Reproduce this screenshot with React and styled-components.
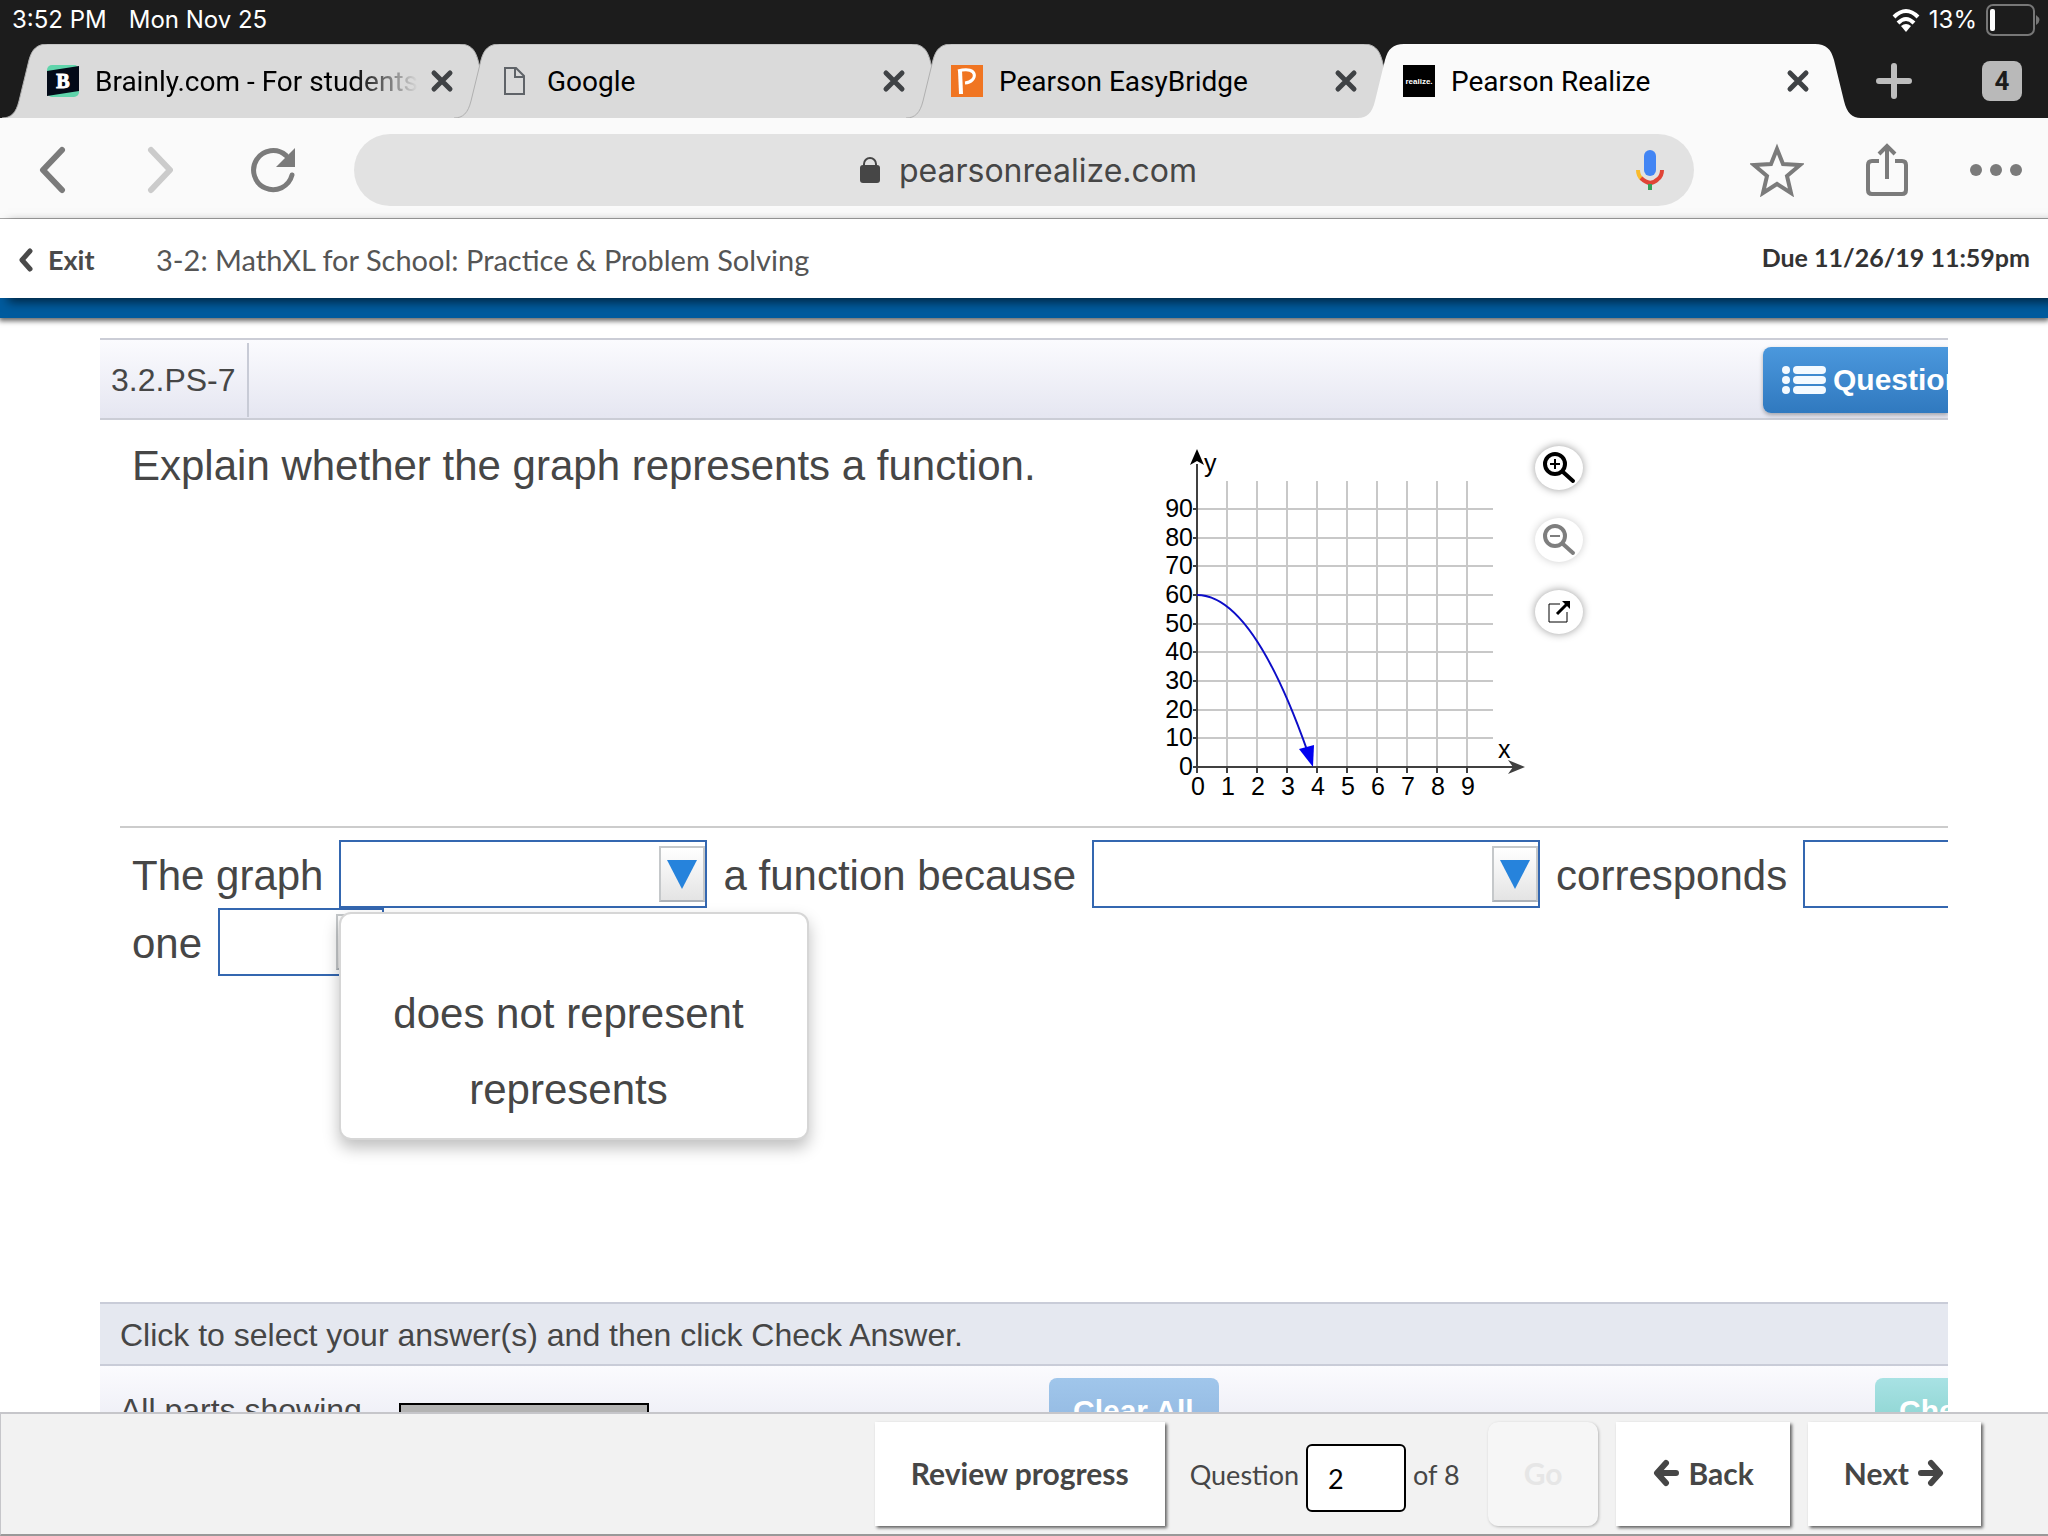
import { useState } from 'react'
import styled, { createGlobalStyle, css } from 'styled-components'

const GlobalStyle = createGlobalStyle`
  * {
    box-sizing: border-box;
  }
  body {
    margin: 0;
    background: #fff;
    color: #464646;
    font-family: "Liberation Sans", Arial, sans-serif;
  }
  button, input, select {
    font: inherit;
    color: inherit;
  }
  button {
    border: 0;
    padding: 0;
    background: none;
    cursor: pointer;
  }
  svg {
    display: block;
    flex: none;
  }
`

const tabs = [
  { title: 'Brainly.com - For students', icon: 'brainly' },
  { title: 'Google', icon: 'page' },
  { title: 'Pearson EasyBridge', icon: 'pearson' },
  { title: 'Pearson Realize', icon: 'realize', active: true },
]

function Favicon({ name }) {
  if (name === 'brainly') {
    return (
      <svg width="32" height="32" viewBox="0 0 32 32">
        <rect width="32" height="32" rx="5" fill="#60d4ab" />
        <path d="M0 6 L32 1 V26 L0 31 Z" fill="#030a18" />
        <text x="16" y="23" textAnchor="middle" fontFamily="Liberation Serif, serif" fontWeight="900" fontSize="20" fill="#fff" stroke="#fff" strokeWidth="1">B</text>
      </svg>
    )
  }
  if (name === 'page') {
    return (
      <svg width="32" height="32" viewBox="0 0 32 32" fill="none" stroke="#5f6368" strokeWidth="2">
        <path d="M6 3 H17 L25 11 V29 H6 Z M16 3 V12 H25" />
      </svg>
    )
  }
  if (name === 'pearson') {
    return (
      <svg width="32" height="32" viewBox="0 0 32 32">
        <rect width="32" height="32" fill="#f07522" />
        <path d="M9 5 L10 29" fill="none" stroke="#fff" strokeWidth="4" />
        <path d="M7 6 C28 0 27 17 14 18" fill="none" stroke="#fff" strokeWidth="3" />
      </svg>
    )
  }
  return (
    <svg width="32" height="32" viewBox="0 0 32 32">
      <rect width="32" height="32" fill="#000" />
      <text x="16" y="19" textAnchor="middle" fontFamily="Liberation Sans, sans-serif" fontWeight="700" fontSize="8" fill="#fff">realize.</text>
    </svg>
  )
}

function BrowserTab({ title, icon, active }) {
  return (
    <Tab>
      <TabShape viewBox="0 0 503 74" preserveAspectRatio="none" $active={active}>
        <path d="M0 74 C9 74 14 69 17 57 L27 16 C30 5 35 0 46 0 H457 C468 0 473 5 476 16 L486 57 C489 69 494 74 503 74" />
      </TabShape>
      <Favicon name={icon} />
      <TabTitle $fade={icon === 'brainly'}>{title}</TabTitle>
      <button type="button" aria-label={`Close ${title}`}>
        <svg width="24" height="24" viewBox="0 0 24 24" stroke="#3f4245" strokeWidth="5" strokeLinecap="round">
          <path d="M4 4 L20 20 M20 4 L4 20" />
        </svg>
      </button>
    </Tab>
  )
}

function Graph() {
  const ticks = [1, 2, 3, 4, 5, 6, 7, 8, 9]
  const px = v => 47 + v * 30
  const py = v => Math.round(323 - v * 2.867)
  return (
    <svg width="380" height="366" viewBox="0 0 380 366" role="img" aria-label="Graph falling from 60 at x = 0 to 0 near x = 4">
      <g stroke="#c8c8c8" strokeWidth="2">
        {ticks.map(t => <path key={t} d={`M${px(t)} 37 V323 M47 ${py(t * 10)} H343`} />)}
      </g>
      <g stroke="#404040" strokeWidth="2">
        <path d="M47 20 V323 H364" fill="none" />
        {[0, ...ticks].map(t => <path key={t} d={`M${px(t)} 323 V329 M43 ${py(t * 10)} H47`} />)}
      </g>
      <path d="M47 5 L54 21 L47 17 L40 21 Z" fill="#000" />
      <path d="M375 323 L358 330 L363 323 L358 316 Z" fill="#404040" />
      <path d="M47 151 Q102 151 157 306" fill="none" stroke="#0d0dc8" strokeWidth="2" />
      <path d="M163 323 L149 305 L164 301 Z" fill="#0000f0" />
      <g fontSize="25" fill="#000">
        {[0, ...ticks].map(t => (
          <g key={t}>
            <text x="43" y={py(t * 10) + 8} textAnchor="end">{t * 10}</text>
            <text x={px(t) + 1} y="351" textAnchor="middle">{t}</text>
          </g>
        ))}
        <text x="54" y="28">y</text>
        <text x="348" y="314">x</text>
      </g>
    </svg>
  )
}

function Magnifier({ plus }) {
  return (
    <svg width="34" height="34" viewBox="0 0 34 34" fill="none" stroke="#000">
      <circle cx="13" cy="13" r="10" strokeWidth="4" />
      <path d="M21 21 L31 30" strokeWidth="4" strokeLinecap="round" />
      <path d={plus ? 'M8 13 H18 M13 8 V18' : 'M8 13 H18'} strokeWidth="2" />
    </svg>
  )
}

function Arrow({ right }) {
  return (
    <svg width="28" height="28" viewBox="0 0 28 28" fill="none" stroke="#464646" strokeWidth="6" strokeLinecap="round" strokeLinejoin="round">
      <path d={right ? 'M4 14 H22 M14 4 L23 14 L14 24' : 'M24 14 H6 M14 4 L5 14 L14 24'} />
    </svg>
  )
}

function Dropdown({ label, options = [], width, value, onChange, children }) {
  return (
    <SelectBox $width={width}>
      <select aria-label={label} value={value} onChange={onChange}>
        <option value="" />
        {options.map(o => <option key={o}>{o}</option>)}
      </select>
      <SelectArrow aria-hidden="true">
        <svg width="30" height="30" viewBox="0 0 30 30"><path d="M0 1 H30 L15 30 Z" fill="#2683dc" /></svg>
      </SelectArrow>
      {children}
    </SelectBox>
  )
}

const answers = ['does not represent', 'represents']

export default function App() {
  const [answer, setAnswer] = useState('')
  const [question, setQuestion] = useState('2')

  return (
    <Page>
      <GlobalStyle />
      <StatusBar>
        <span>3:52 PM</span>
        <span>Mon Nov 25</span>
        <Battery>
          <svg width="28" height="28" viewBox="0 0 28 28" fill="none" stroke="#fff" strokeWidth="4">
            <path d="M2 11 Q14 -1 26 11 M6 17 Q14 9 22 17" />
            <path d="M14 26 L9 20 Q14 16 19 20 Z" fill="#fff" stroke="none" />
          </svg>
          <span>13%</span>
          <svg width="54" height="32" viewBox="0 0 54 32">
            <rect x="1" y="1" width="47" height="30" rx="6" fill="none" stroke="#777" strokeWidth="2" />
            <rect x="4" y="5" width="5" height="22" rx="2" fill="#fff" />
            <path d="M50 11 Q57 16 50 21 Z" fill="#777" />
          </svg>
        </Battery>
      </StatusBar>

      <TabStrip>
        {tabs.map(tab => <BrowserTab key={tab.title} {...tab} />)}
        <StripEnd>
          <button type="button" aria-label="New tab">
            <svg width="36" height="36" viewBox="0 0 36 36" stroke="#bdbdbd" strokeWidth="6" strokeLinecap="round"><path d="M18 3 V33 M3 18 H33" /></svg>
          </button>
          <TabCount type="button" aria-label="4 open tabs">4</TabCount>
        </StripEnd>
      </TabStrip>

      <Toolbar>
        <NavButtons>
          <button type="button" aria-label="Back">
            <svg width="28" height="48" viewBox="0 0 28 48" fill="none" stroke="#7b7b7b" strokeWidth="6" strokeLinecap="round" strokeLinejoin="round"><path d="M24 4 L5 24 L24 44" /></svg>
          </button>
          <button type="button" aria-label="Forward">
            <svg width="30" height="48" viewBox="0 0 30 48" fill="none" stroke="#cbcbcb" strokeWidth="6" strokeLinecap="round" strokeLinejoin="round"><path d="M8 4 L27 24 L8 44" /></svg>
          </button>
          <button type="button" aria-label="Reload">
            <svg width="46" height="46" viewBox="0 0 46 46">
              <path d="M42 28 A19.500 19.500 0 1 1 36 8.500" fill="none" stroke="#7b7b7b" strokeWidth="5" strokeLinecap="round" />
              <path d="M45 1 V20 H26 Z" fill="#7b7b7b" />
            </svg>
          </button>
        </NavButtons>
        <AddressBar>
          <Address type="button">
            <svg width="22" height="28" viewBox="0 0 22 28">
              <path d="M5 11 V8 a6 6 0 0 1 12 0 V11" fill="none" stroke="#464646" strokeWidth="2" />
              <rect x="1" y="9" width="20" height="18" rx="3" fill="#464646" />
            </svg>
            pearsonrealize.com
          </Address>
          <button type="button" aria-label="Voice search">
            <svg width="28" height="42" viewBox="0 0 28 42" fill="none" strokeWidth="4">
              <rect x="8" y="1" width="12" height="26" rx="6" fill="#4285f4" />
              <path d="M2 21 Q2 27 6 30" stroke="#f9bb2d" />
              <path d="M5 29 Q14 38 22 30 Q26 27 26 21" stroke="#e04436" />
              <path d="M14 35 V41" stroke="#34a058" />
            </svg>
          </button>
        </AddressBar>
        <ToolButtons>
          <button type="button" aria-label="Bookmark">
            <svg width="54" height="54" viewBox="0 0 54 54" fill="none" stroke="#7b7b7b" strokeWidth="4">
              <path d="M27 6 L33 21 L50 22 L37 33 L41 50 L27 41 L13 50 L17 33 L4 22 L21 21 Z" />
            </svg>
          </button>
          <button type="button" aria-label="Share">
            <svg width="44" height="54" viewBox="0 0 44 54" fill="none" stroke="#7b7b7b" strokeWidth="4">
              <path d="M14 18 H7 Q3 18 3 22 V47 Q3 51 7 51 H37 Q41 51 41 47 V22 Q41 18 37 18 H30 M22 36 V4 M14 11 L22 3 L30 11" />
            </svg>
          </button>
          <button type="button" aria-label="More">
            <svg width="52" height="12" viewBox="0 0 52 12" fill="#7b7b7b"><circle cx="6" cy="6" r="6" /><circle cx="26" cy="6" r="6" /><circle cx="46" cy="6" r="6" /></svg>
          </button>
        </ToolButtons>
      </Toolbar>

      <AppHeader>
        <ExitLink href="#exit">
          <svg width="16" height="26" viewBox="0 0 16 26" fill="none" stroke="#4a4a4a" strokeWidth="5" strokeLinecap="round" strokeLinejoin="round"><path d="M12 4 L4 13 L12 22" /></svg>
          Exit
        </ExitLink>
        <AssignmentTitle>3-2: MathXL for School: Practice &amp; Problem Solving</AssignmentTitle>
        <DueDate>Due 11/26/19 11:59pm</DueDate>
      </AppHeader>
      <BlueBar />

      <Main>
        <Player>
          <PlayerHeader>
            <ExerciseId>3.2.PS-7</ExerciseId>
            <QuestionHelp type="button">
              <svg width="46" height="30" viewBox="0 0 46 30" fill="#f4faff">
                {[5, 15, 25].map(y => (
                  <g key={y}>
                    <circle cx="5" cy={y} r="4" />
                    <rect x="12" y={y - 4} width="33" height="8" rx="4" />
                  </g>
                ))}
              </svg>
              Question Help
            </QuestionHelp>
          </PlayerHeader>

          <PromptRow>
            <Prompt>Explain whether the graph represents a function.</Prompt>
            <Graph />
            <GraphTools>
              <RoundButton type="button" aria-label="Zoom in"><Magnifier plus /></RoundButton>
              <RoundButton type="button" aria-label="Zoom out" disabled><Magnifier /></RoundButton>
              <RoundButton type="button" aria-label="Open larger graph">
                <svg width="24" height="24" viewBox="0 0 24 24" fill="none" stroke="#000">
                  <path d="M13 4 H2 V22 H20 V12" strokeWidth="1" />
                  <path d="M10 14 L20 4" strokeWidth="3" />
                  <path d="M15 1 H23 V9 Z" fill="#000" stroke="none" />
                </svg>
              </RoundButton>
            </GraphTools>
          </PromptRow>

          <AnswerArea>
            <AnswerLine>
              <span>The graph</span>
              <Dropdown label="The graph" width={368} options={answers} value={answer} onChange={e => setAnswer(e.target.value)}>
                <OptionList role="listbox" aria-label="Choices">
                  {['', ...answers].map(o => (
                    <li key={o} role="option" aria-selected={o === answer} onClick={() => setAnswer(o)}>{o}</li>
                  ))}
                </OptionList>
              </Dropdown>
              <span>a function because</span>
              <Dropdown label="a function because" width={448} />
              <span>corresponds</span>
              <Dropdown label="corresponds" width={368} />
            </AnswerLine>
            <AnswerLine>
              <span>one</span>
              <Dropdown label="one" width={166} />
            </AnswerLine>
          </AnswerArea>

          <Instruction>Click to select your answer(s) and then click Check Answer.</Instruction>
          <PartsBar>
            <PartsLabel>All parts showing</PartsLabel>
            <PartsProgress />
            <ActionButton type="button">Clear All</ActionButton>
            <ActionButton type="button" $teal>Check Answer</ActionButton>
          </PartsBar>
        </Player>
      </Main>

      <Footer>
        <FooterButton type="button">Review progress</FooterButton>
        <QuestionJump>
          <label htmlFor="question">Question</label>
          <input id="question" value={question} onChange={e => setQuestion(e.target.value)} />
          <span>of 8</span>
        </QuestionJump>
        <FooterButton type="button" disabled>Go</FooterButton>
        <FooterButton type="button"><Arrow />Back</FooterButton>
        <FooterButton type="button">Next<Arrow right /></FooterButton>
      </Footer>
    </Page>
  )
}

const Page = styled.div`
  display: flex;
  flex-direction: column;
  height: 100vh;
  overflow: hidden;
`
const StatusBar = styled.div`
  display: flex;
  align-items: center;
  gap: 22px;
  height: 44px;
  flex: none;
  padding: 0 8px 5px 12px;
  background: #1c1c1c;
  color: #fff;
  font: 24px Inter, sans-serif;
`
const Battery = styled.div`
  display: flex;
  align-items: center;
  gap: 9px;
  margin-left: auto;
`
const TabStrip = styled.div`
  display: flex;
  align-items: center;
  flex: none;
  height: 74px;
  padding-left: 2px;
  background: #1c1c1c;
`
const Tab = styled.div`
  position: relative;
  display: flex;
  align-items: center;
  flex: 0 1 503px;
  min-width: 0;
  height: 74px;
  padding: 0 51px 0 45px;
  & + & {
    margin-left: -51px;
  }
  > *:not(:first-child) {
    position: relative;
  }
`
const TabShape = styled.svg`
  position: absolute;
  inset: 0;
  width: 100%;
  height: 100%;
  fill: ${p => (p.$active ? '#fafafa' : '#dadada')};
  stroke: ${p => (p.$active ? 'none' : '#b0b0b0')};
  stroke-width: 1;
`
const TabTitle = styled.span`
  flex: 1;
  min-width: 0;
  margin: 0 12px 0 16px;
  overflow: hidden;
  white-space: nowrap;
  color: #000;
  font: 28px Roboto, sans-serif;
  ${p => p.$fade && css`
    mask-image: linear-gradient(90deg, #000 80%, transparent);
  `}
`
const StripEnd = styled.div`
  display: flex;
  flex: 1;
  align-items: center;
  justify-content: space-between;
  padding: 0 26px 0 15px;
`
const TabCount = styled.button`
  width: 40px;
  height: 40px;
  border-radius: 8px;
  background: #b9b9b9;
  color: #1c1c1c;
  font: 700 26px Roboto, sans-serif;
`
const Toolbar = styled.div`
  display: flex;
  align-items: center;
  flex: none;
  height: 101px;
  padding: 4px 26px 0 38px;
  background: #fafafa;
  border-bottom: 1px solid #a6a6a6;
`
const NavButtons = styled.div`
  display: flex;
  align-items: center;
  gap: 77px;
  margin-right: 58px;
`
const AddressBar = styled.div`
  display: flex;
  align-items: center;
  flex: 1;
  height: 72px;
  padding: 0 30px 0 66px;
  border-radius: 36px;
  background: #e2e2e2;
`
const Address = styled.button`
  display: flex;
  flex: 1;
  align-items: center;
  justify-content: center;
  gap: 18px;
  color: #464646;
  font: 32px Inter, sans-serif;
`
const ToolButtons = styled.div`
  display: flex;
  align-items: center;
  gap: 61px;
  margin-left: 56px;
`
const AppHeader = styled.header`
  position: relative;
  z-index: 1;
  display: flex;
  align-items: center;
  flex: none;
  height: 79px;
  padding: 2px 18px 0;
  background: #fff;
  box-shadow: 8px 4px 10px rgba(0, 0, 0, 0.6);
  color: #555;
  font: 29px Lato, sans-serif;
`
const ExitLink = styled.a`
  display: flex;
  align-items: center;
  gap: 14px;
  width: 138px;
  color: #4a4a4a;
  font-size: 27px;
  font-weight: 700;
  text-decoration: none;
`
const AssignmentTitle = styled.h1`
  margin: 0;
  font: inherit;
`
const DueDate = styled.span`
  margin-left: auto;
  padding-bottom: 6px;
  color: #333;
  font-size: 25px;
  font-weight: 700;
`
const BlueBar = styled.div`
  flex: none;
  height: 20px;
  background: #005b9e;
  box-shadow: 0 2px 5px 1px rgba(0, 0, 0, 0.6);
`
const Main = styled.main`
  flex: 1;
  min-height: 0;
  padding: 20px 100px 0;
  overflow: hidden;
`
const Player = styled.section`
  overflow: hidden;
`
const PlayerHeader = styled.div`
  display: flex;
  align-items: center;
  justify-content: space-between;
  height: 82px;
  padding-top: 2px;
  background: linear-gradient(#fbfbfe, #e5e6f1);
  border-top: 2px solid #cbcdd6;
  border-bottom: 2px solid #cbcdd6;
`
const ExerciseId = styled.h2`
  margin: 0;
  padding: 0 11px;
  border-right: 2px solid #c8cbd6;
  font-size: 32px;
  font-weight: 400;
  line-height: 74px;
`
const QuestionHelp = styled.button`
  display: flex;
  align-items: center;
  gap: 6px;
  width: 185px;
  height: 66px;
  padding-left: 18px;
  border-radius: 8px 0 0 8px;
  background: linear-gradient(#4b98dd, #3079bf);
  box-shadow: 0 2px 4px rgba(0, 0, 0, 0.3);
  color: #fff;
  font-size: 30px;
  font-weight: 700;
  white-space: nowrap;
  overflow: hidden;
`
const PromptRow = styled.div`
  display: flex;
  padding: 24px 0 16px;
`
const Prompt = styled.p`
  flex: 0 1 1050px;
  margin: 0;
  padding-left: 32px;
  font-size: 42px;
  line-height: 44px;
`
const GraphTools = styled.div`
  display: flex;
  flex-direction: column;
  gap: 28px;
  padding: 2px 0 0 5px;
`
const RoundButton = styled.button`
  display: flex;
  align-items: center;
  justify-content: center;
  width: 48px;
  height: 44px;
  border-radius: 50%;
  background: #fff;
  box-shadow: 0 0 8px rgba(0, 0, 0, 0.4);
  &:disabled {
    opacity: 0.5;
  }
`
const AnswerArea = styled.div`
  min-height: 476px;
  margin-left: 20px;
  padding: 12px 0 0 12px;
  border-top: 2px solid #ccc;
`
const AnswerLine = styled.div`
  display: flex;
  align-items: center;
  gap: 16px;
  height: 68px;
  font-size: 42px;
  white-space: nowrap;
  > span {
    padding-top: 4px;
  }
`
const SelectBox = styled.div`
  position: relative;
  display: flex;
  flex: none;
  align-items: center;
  justify-content: flex-end;
  width: ${p => p.$width}px;
  height: 68px;
  border: 2px solid #3467b0;
  select {
    flex: 1;
    align-self: stretch;
    min-width: 0;
    padding: 0 8px;
    border: 0;
    background: #fff;
    appearance: none;
    outline: none;
  }
`
const SelectArrow = styled.span`
  display: flex;
  align-items: center;
  justify-content: center;
  width: 46px;
  height: 56px;
  border: 2px solid #c5c8ca;
  border-bottom-color: #adb2b8;
  background: linear-gradient(#fff, #e4e4e4);
  pointer-events: none;
`
const OptionList = styled.ul`
  position: absolute;
  top: 70px;
  left: -2px;
  z-index: 2;
  width: 470px;
  height: 228px;
  margin: 0;
  padding: 0 12px 0 0;
  border: 2px solid #d6d6d6;
  border-radius: 12px;
  background: #fff;
  box-shadow: 0 8px 16px rgba(0, 0, 0, 0.25);
  list-style: none;
  text-align: center;
  li {
    height: 76px;
    line-height: 48px;
    cursor: pointer;
  }
`
const Instruction = styled.div`
  padding: 2px 20px 0;
  background: #e5e8f0;
  border-top: 2px solid #c9ccd8;
  border-bottom: 2px solid #c9ccd8;
  font-size: 32px;
  line-height: 58px;
`
const PartsBar = styled.div`
  display: flex;
  align-items: flex-start;
  height: 92px;
  padding: 12px 0 0 20px;
  background: linear-gradient(#fbfbfe, #e5e6f1);
`
const PartsLabel = styled.span`
  width: 279px;
  font-size: 32px;
  line-height: 64px;
`
const PartsProgress = styled.div`
  width: 250px;
  height: 36px;
  margin: 25px 400px 0 0;
  border: 2px solid #000;
  background: #b3b3b3;
`
const ActionButton = styled.button`
  flex: none;
  width: 170px;
  height: 66px;
  padding: 0 24px;
  border-radius: 8px;
  background: ${p => (p.$teal ? 'linear-gradient(#a8e2e4, #82cfca)' : 'linear-gradient(#a0c6eb, #8fb5de)')};
  color: #fff;
  font-size: 30px;
  font-weight: 700;
  text-align: left;
  white-space: nowrap;
  & + & {
    width: 260px;
    margin: 0 -187px 0 auto;
  }
`
const Footer = styled.footer`
  display: flex;
  align-items: flex-start;
  justify-content: flex-end;
  gap: 18px;
  flex: none;
  height: 124px;
  padding: 8px 67px 0 0;
  background: #f2f2f2;
  border: solid #c6c6ca;
  border-width: 2px 0 2px 1px;
  border-bottom-color: #999;
  font: 27px Lato, sans-serif;
`
const FooterButton = styled.button`
  display: flex;
  align-items: center;
  justify-content: center;
  gap: 8px;
  height: 104px;
  padding: 0 36px 2px;
  background: #fff;
  box-shadow: 2px 2px 3px rgba(0, 0, 0, 0.6);
  color: #464646;
  font-size: 30px;
  font-weight: 700;
  &:disabled {
    border-radius: 10px;
    background: #f6f6f6;
    box-shadow: 1px 1px 3px rgba(0, 0, 0, 0.25);
    color: #e6e6e6;
  }
`
const QuestionJump = styled.div`
  display: flex;
  align-items: center;
  gap: 7px;
  height: 104px;
  padding: 0 10px 0 7px;
  input {
    width: 100px;
    height: 68px;
    margin-top: 8px;
    padding: 0 20px;
    border: 2px solid #000;
    border-radius: 6px;
    background: #fff;
    color: #000;
  }
`
